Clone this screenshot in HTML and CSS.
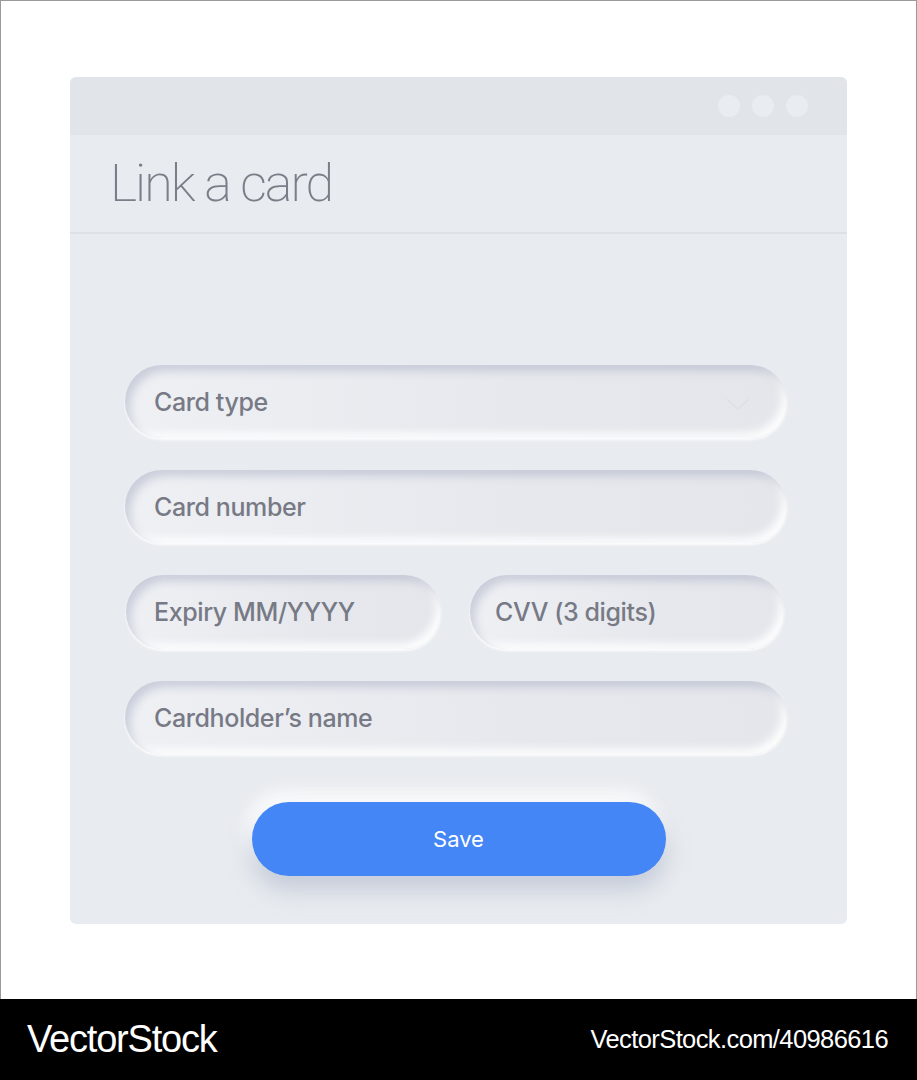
FILE: index.html
```html
<!DOCTYPE html>
<html>
<head>
<meta charset="utf-8">
<link rel="stylesheet" href="styles.css">
</head>
<body>
<div class="stage">
  <div class="window">
    <div class="titlebar">
      <span class="dot"></span><span class="dot"></span><span class="dot"></span>
    </div>
    <div class="header"><h1 class="title">Link a card</h1></div>
    <div class="form">
      <div class="field select">
        <span class="ph">Card type</span>
        <svg class="chev" width="26" height="16" viewBox="0 0 26 16"><path d="M2 3 L13 13 L24 3" fill="none" stroke="#dcdfe5" stroke-width="1.5"/></svg>
      </div>
      <div class="field"><span class="ph">Card number</span></div>
      <div class="row">
        <div class="field half"><span class="ph">Expiry MM/YYYY</span></div>
        <div class="field half cvv"><span class="ph">CVV (3 digits)</span></div>
      </div>
      <div class="field"><span class="ph">Cardholder’s name</span></div>
      <div class="btnwrap"><div class="btn">Save</div></div>
    </div>
  </div>
</div>
<div class="footer">
  <span class="brand">VectorStock</span>
  <span class="url">VectorStock.com/40986616</span>
</div>
</body>
</html>
```
FILE: styles.css
```css
html, body { margin: 0; padding: 0; background: #fff; }
body { width: 917px; font-family: Inter, "Noto Sans", sans-serif; }
.stage {
  box-sizing: border-box;
  height: 999px;
  border: 1px solid #9a9a9a;
  border-bottom: none;
  padding: 76px 0 0 69px;
}
.window {
  width: 777px;
  height: 847px;
  background: #e8ebef;
  border-radius: 6px;
  overflow: hidden;
}
.titlebar {
  height: 58px;
  background: #e1e5e9;
  display: flex;
  justify-content: flex-end;
  align-items: center;
  gap: 12px;
  padding-right: 39px;
  box-sizing: border-box;
}
.dot { width: 22px; height: 22px; border-radius: 50%; background: #e9ecf0; }
.header {
  height: 97px;
  border-bottom: 2px solid #dde1e6;
  box-sizing: content-box;
  display: flex;
  align-items: center;
  padding-left: 40px;
}
.title {
  margin: 0;
  font-family: Roboto, sans-serif;
  font-weight: 200;
  font-size: 52px;
  color: #7b7e88;
  letter-spacing: -2px;
  line-height: 1;
  padding-top: 1px;
}
.form {
  padding: 131px 60px 0 55px;
  display: flex;
  flex-direction: column;
  gap: 32px;
}
.field {
  height: 73px;
  border-radius: 37px;
  background: linear-gradient(90deg, #eef0f4 0%, #e6e8ed 60%, #e4e6eb 100%);
  box-shadow: inset 5px 6px 9px rgba(160,166,188,0.45), inset -5px -5px 8px rgba(255,255,255,0.95), 0 2px 3px rgba(255,255,255,0.9);
  display: flex;
  align-items: center;
  padding-left: 29px;
  position: relative;
}
.ph { font-size: 25px; font-weight: 500; color: #777a85; letter-spacing: -0.4px; }
.chev { position: absolute; right: 36px; top: 31px; }
.row { display: flex; gap: 29px; padding-left: 1px; }
.half { flex: 0 0 315px; height: 74px; padding-left: 28px; box-sizing: border-box; }
.cvv { flex-basis: 314px; padding-left: 25px; }
.btnwrap { display: flex; justify-content: center; padding-top: 16px; padding-left: 5px; }
.btn {
  width: 414px;
  height: 74px;
  border-radius: 37px;
  background: #4486f5;
  color: #fff;
  font-size: 22px;
  font-weight: 400;
  display: flex;
  align-items: center;
  justify-content: center;
  box-shadow: 0 14px 22px rgba(170,178,200,0.55), -6px -10px 18px rgba(255,255,255,0.9);
}
.footer {
  height: 81px;
  background: #000;
  display: flex;
  align-items: center;
  justify-content: space-between;
  padding: 0 29px 0 27px;
  color: #fff;
  font-family: "Liberation Sans", Arial, sans-serif;
}
.brand { font-size: 38px; letter-spacing: -1.2px; }
.url { font-size: 25.5px; letter-spacing: -0.6px; }
```
